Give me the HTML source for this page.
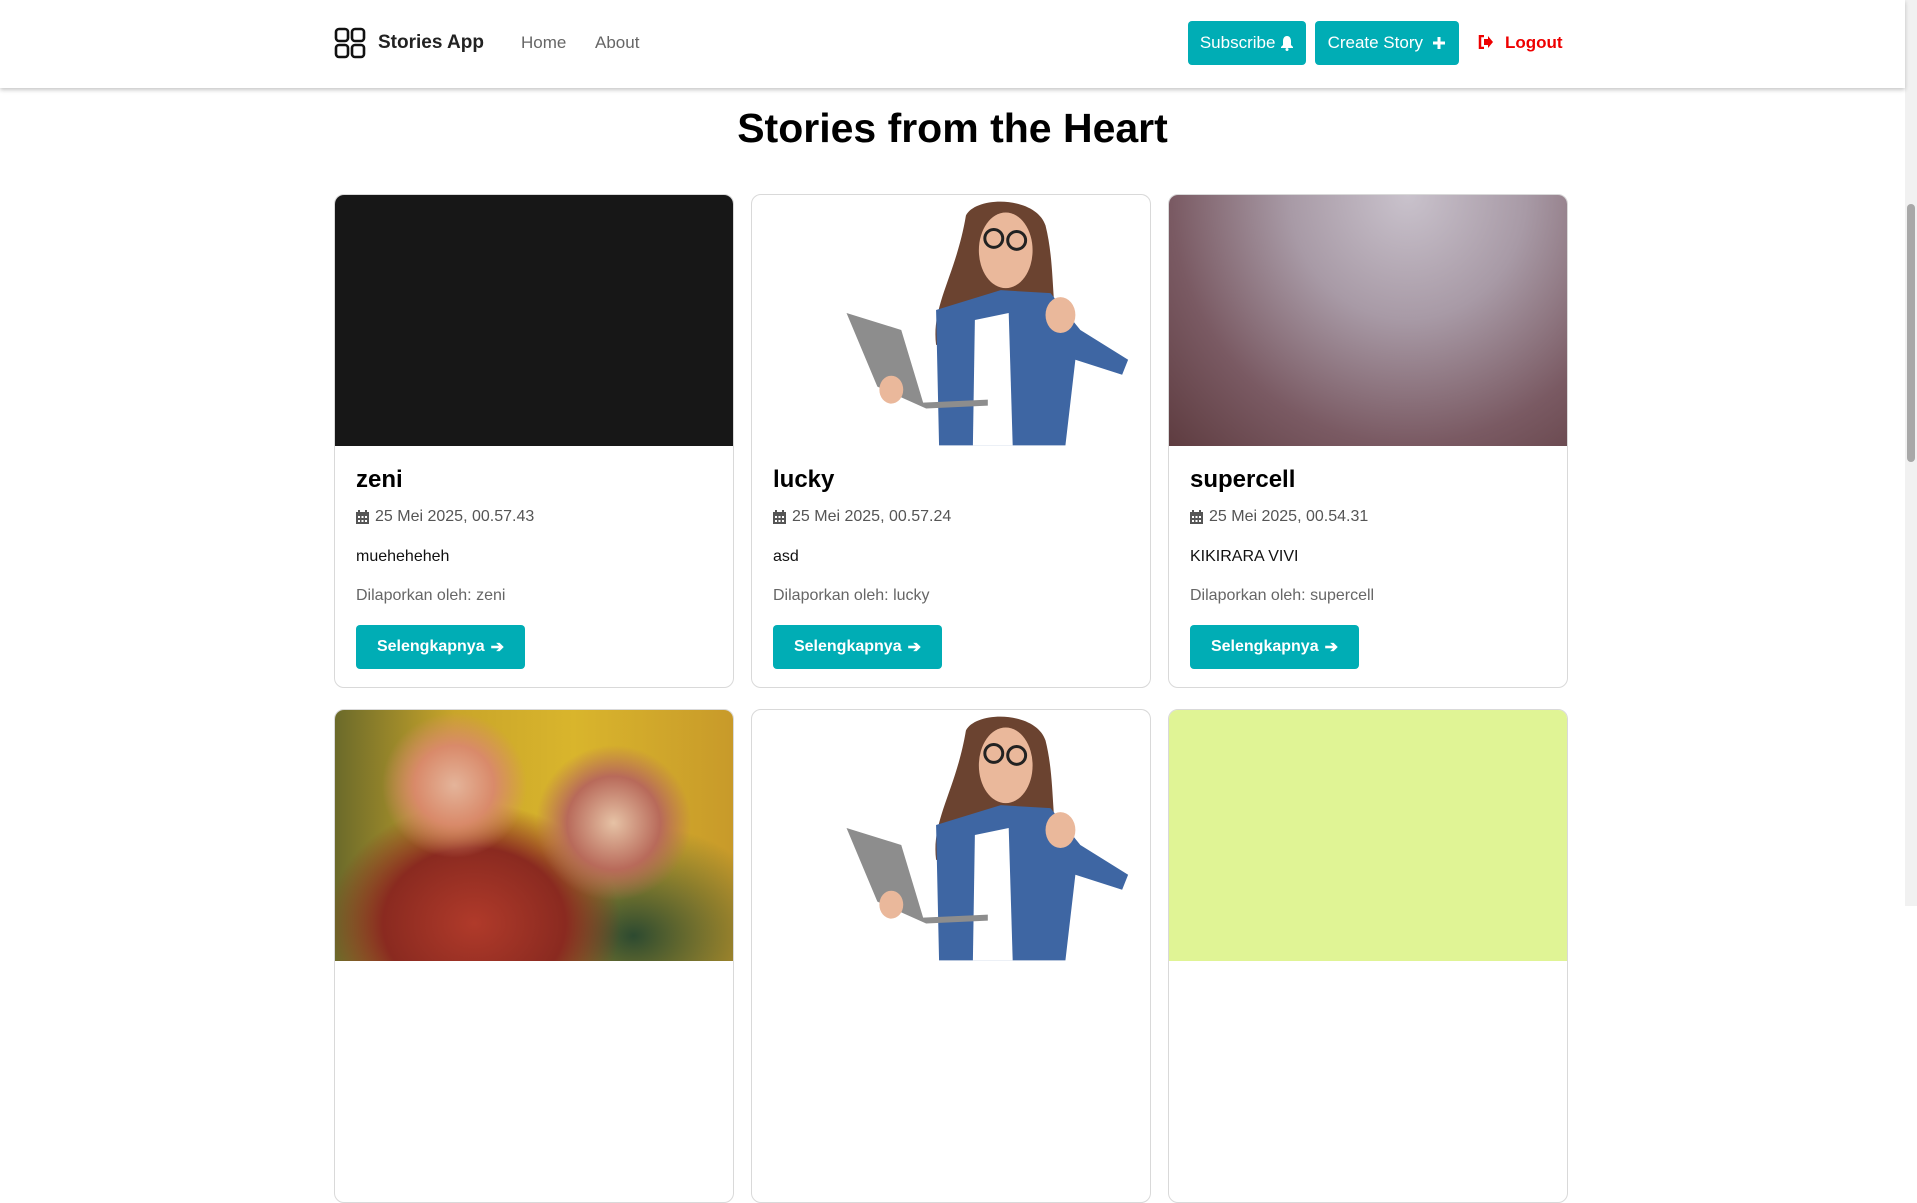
<!DOCTYPE html>
<html><head><meta charset="utf-8"><style>
*{box-sizing:border-box;margin:0;padding:0}
body{width:1917px;height:906px;overflow:hidden;background:#fff;font-family:"Liberation Sans",sans-serif;position:relative}
.nav{position:absolute;left:0;top:0;width:1905px;height:88px;background:#fff;box-shadow:0 2px 4px rgba(0,0,0,.22);z-index:2}
.abs{position:absolute}
.btn{position:absolute;background:#00adb5;color:#fff;border-radius:4px;display:flex;align-items:center;justify-content:center;font-size:17px}
.sb{position:absolute;right:0;top:0;width:12px;height:906px;background:#f1f1f1}
.thumb{position:absolute;right:2px;top:204px;width:8px;height:258px;background:#a8a8a8;border-radius:4px}
h1{position:absolute;left:0;width:1905px;top:105px;text-align:center;font-size:41px;font-weight:bold;color:#000}
.card{position:absolute;width:400px;height:494px;border:1px solid #d9d9d9;border-radius:10px;overflow:hidden;background:#fff}
.img{height:251px;width:100%}
.body{padding:0 21px}
.t{font-size:24px;font-weight:bold;margin-top:20px;height:30px}
.d{font-size:16px;color:#555;margin-top:12px;display:flex;align-items:center;gap:6px}
.p{font-size:16px;color:#111;margin-top:22px}
.r{font-size:16px;color:#666;margin-top:21px}
.sel{margin-top:20px;width:169px;height:44px;background:#00adb5;color:#fff;border-radius:4px;display:flex;align-items:center;justify-content:center;font-weight:bold;font-size:16px;gap:6px}
</style></head><body>
<div class="nav">
 <svg class="abs" style="left:334px;top:27px" width="32" height="32" viewBox="0 0 32 32" fill="none" stroke="#111" stroke-width="2.6"><rect x="2" y="2" width="12" height="12" rx="3"/><rect x="18" y="2" width="12" height="12" rx="3"/><rect x="2" y="18" width="12" height="12" rx="3"/><rect x="18" y="18" width="12" height="12" rx="3"/></svg>
 <div class="abs" style="left:378px;top:32px;font-size:19px;font-weight:bold;color:#222">Stories App</div>
 <div class="abs" style="left:521px;top:33px;font-size:17px;color:#666">Home</div>
 <div class="abs" style="left:595px;top:33px;font-size:17px;color:#666">About</div>
 <div class="btn" style="left:1188px;top:21px;width:118px;height:44px">Subscribe&nbsp;<svg width="14" height="16" viewBox="0 0 14 16"><path d="M7 1C4 1 3 4 3 6v4L1 12v1h12v-1l-2-2V6c0-2-1-5-4-5z" fill="#fff"/><circle cx="7" cy="14.5" r="1.5" fill="#fff"/></svg></div>
 <div class="btn" style="left:1315px;top:21px;width:144px;height:44px;font-size:17px">Create Story&nbsp;&nbsp;<svg width="14" height="14" viewBox="0 0 14 14"><path d="M7 1v12M1 7h12" stroke="#fff" stroke-width="3"/></svg></div>
 <svg class="abs" style="left:1478px;top:35px" width="16" height="14" viewBox="0 0 16 14"><path d="M6 1H2v12h4" stroke="#e00" stroke-width="2.5" fill="none"/><path d="M6 4h4V1l5 6-5 6v-3H6z" fill="#e00"/></svg>
 <div class="abs" style="left:1505px;top:33px;font-size:17px;color:#e00;font-weight:bold">Logout</div>
</div>
<h1>Stories from the Heart</h1>

<div class="card" style="left:334px;top:194px"><div class="img" style="background:#171717"></div><div class="body">
<div class="t">zeni</div><div class="d"><svg width="13" height="14" viewBox="0 0 13 14"><rect x="0" y="2" width="13" height="12" fill="#555"/><rect x="2" y="0" width="2" height="3" fill="#555"/><rect x="9" y="0" width="2" height="3" fill="#555"/><g fill="#fff"><rect x="2" y="6" width="2" height="2"/><rect x="5.5" y="6" width="2" height="2"/><rect x="9" y="6" width="2" height="2"/><rect x="2" y="10" width="2" height="2"/><rect x="5.5" y="10" width="2" height="2"/><rect x="9" y="10" width="2" height="2"/></g></svg>25 Mei 2025, 00.57.43</div>
<div class="p">mueheheheh</div><div class="r">Dilaporkan oleh: zeni</div><div class="sel">Selengkapnya <span>➔</span></div></div></div>

<div class="card" style="left:751px;top:194px"><svg class="img" viewBox="0 0 400 251" style="display:block">
<path d="M215 20 C225 0 285 0 295 30 C305 70 300 110 310 150 L185 150 C180 110 205 80 215 20Z" fill="#6b4330"/>
<ellipse cx="255" cy="55" rx="27" ry="38" fill="#eab89b"/>
<g fill="none" stroke="#222" stroke-width="3"><circle cx="243" cy="43" r="9"/><circle cx="266" cy="45" r="9"/></g>
<path d="M185 115 L250 95 L300 98 L330 135 L378 165 L372 180 L325 165 L315 251 L188 251Z" fill="#3e66a3"/>
<path d="M224 125 L258 118 L262 251 L222 251Z" fill="#fff"/>
<ellipse cx="310" cy="120" rx="15" ry="18" fill="#eab89b"/>
<path d="M95 118 L150 135 L172 208 L237 205 L237 211 L175 214 L126 192Z" fill="#8d8d8d"/>
<ellipse cx="140" cy="195" rx="12" ry="14" fill="#eab89b"/>
</svg><div class="body">
<div class="t">lucky</div><div class="d"><svg width="13" height="14" viewBox="0 0 13 14"><rect x="0" y="2" width="13" height="12" fill="#555"/><rect x="2" y="0" width="2" height="3" fill="#555"/><rect x="9" y="0" width="2" height="3" fill="#555"/><g fill="#fff"><rect x="2" y="6" width="2" height="2"/><rect x="5.5" y="6" width="2" height="2"/><rect x="9" y="6" width="2" height="2"/><rect x="2" y="10" width="2" height="2"/><rect x="5.5" y="10" width="2" height="2"/><rect x="9" y="10" width="2" height="2"/></g></svg>25 Mei 2025, 00.57.24</div>
<div class="p">asd</div><div class="r">Dilaporkan oleh: lucky</div><div class="sel">Selengkapnya <span>➔</span></div></div></div>

<div class="card" style="left:1168px;top:194px"><div class="img" style="background:radial-gradient(ellipse at 60% 0%,#c9c2cc 0%,#a89aa6 35%,#7a5a63 70%,#5e3c40 100%)"></div><div class="body">
<div class="t">supercell</div><div class="d"><svg width="13" height="14" viewBox="0 0 13 14"><rect x="0" y="2" width="13" height="12" fill="#555"/><rect x="2" y="0" width="2" height="3" fill="#555"/><rect x="9" y="0" width="2" height="3" fill="#555"/><g fill="#fff"><rect x="2" y="6" width="2" height="2"/><rect x="5.5" y="6" width="2" height="2"/><rect x="9" y="6" width="2" height="2"/><rect x="2" y="10" width="2" height="2"/><rect x="5.5" y="10" width="2" height="2"/><rect x="9" y="10" width="2" height="2"/></g></svg>25 Mei 2025, 00.54.31</div>
<div class="p">KIKIRARA VIVI</div><div class="r">Dilaporkan oleh: supercell</div><div class="sel">Selengkapnya <span>➔</span></div></div></div>

<div class="card" style="left:334px;top:709px"><div class="img" style="background:radial-gradient(circle at 30% 30%,#e4b49a 0,#d98a6a 12%,transparent 22%),radial-gradient(circle at 70% 45%,#e6c2a5 0,#b86a5a 15%,transparent 25%),radial-gradient(ellipse at 35% 85%,#b03a2a 0,#8a2a20 25%,transparent 40%),radial-gradient(ellipse at 75% 90%,#2d4a30 0,transparent 35%),linear-gradient(90deg,#6b6a2a 0%,#c9a52a 30%,#d9b52c 60%,#c89a2a 100%)"></div></div>
<div class="card" style="left:751px;top:709px"><svg class="img" viewBox="0 0 400 251" style="display:block">
<path d="M215 20 C225 0 285 0 295 30 C305 70 300 110 310 150 L185 150 C180 110 205 80 215 20Z" fill="#6b4330"/>
<ellipse cx="255" cy="55" rx="27" ry="38" fill="#eab89b"/>
<g fill="none" stroke="#222" stroke-width="3"><circle cx="243" cy="43" r="9"/><circle cx="266" cy="45" r="9"/></g>
<path d="M185 115 L250 95 L300 98 L330 135 L378 165 L372 180 L325 165 L315 251 L188 251Z" fill="#3e66a3"/>
<path d="M224 125 L258 118 L262 251 L222 251Z" fill="#fff"/>
<ellipse cx="310" cy="120" rx="15" ry="18" fill="#eab89b"/>
<path d="M95 118 L150 135 L172 208 L237 205 L237 211 L175 214 L126 192Z" fill="#8d8d8d"/>
<ellipse cx="140" cy="195" rx="12" ry="14" fill="#eab89b"/>
</svg></div>
<div class="card" style="left:1168px;top:709px"><div class="img" style="background:#e0f495"></div></div>

<div class="sb"><div class="thumb"></div></div>
</body></html>
